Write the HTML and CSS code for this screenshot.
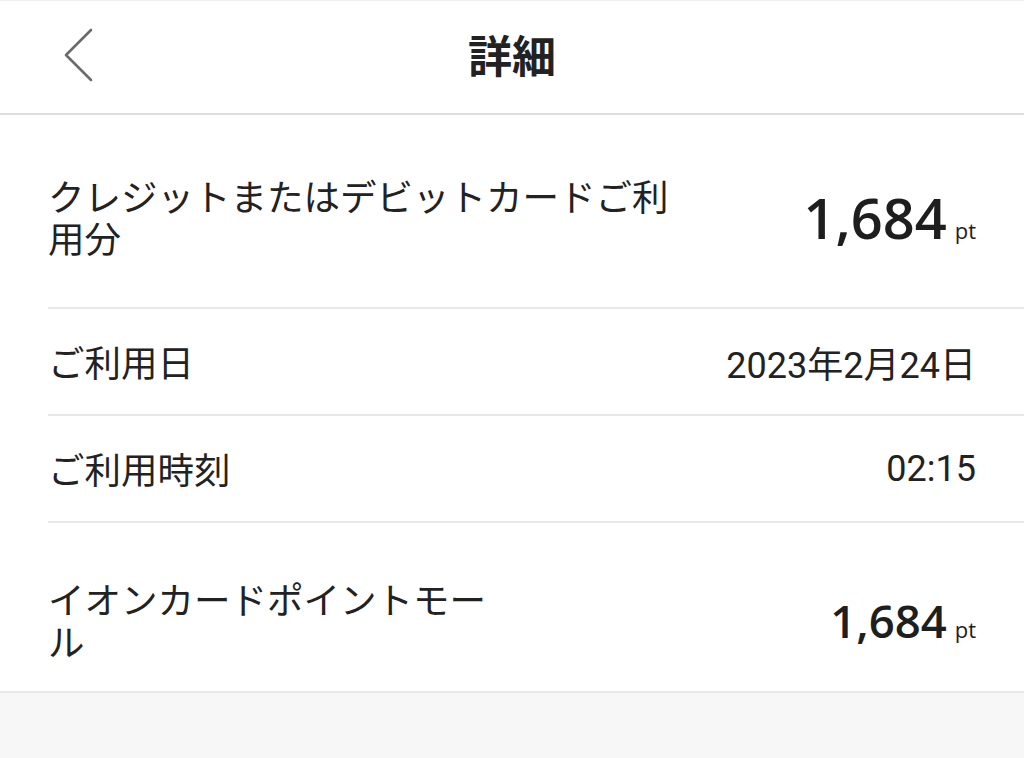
FILE: index.html
```html
<!DOCTYPE html>
<html lang="ja">
<head>
<meta charset="utf-8">
<title>詳細</title>
<link rel="stylesheet" href="styles.css">
</head>
<body>
<div class="app">
  <header class="topbar">
    <div class="topbar__side">
      <span class="back" aria-label="戻る">
        <svg width="30" height="54" viewBox="0 0 30 54"><polyline points="27,2 2,27 27,52" fill="none" stroke="#6b6b6b" stroke-width="2.6" stroke-linecap="round" stroke-linejoin="round"/></svg>
      </span>
    </div>
    <h1 class="topbar__title">詳細</h1>
    <div class="topbar__side"></div>
  </header>
  <main class="detail">
    <div class="row row--head">
      <div class="label label--wide">クレジットまたはデビットカードご利用分</div>
      <div class="amount amount--lg">1,684<span class="unit">pt</span></div>
    </div>
    <div class="row row--info">
      <div class="label">ご利用日</div>
      <div class="value">2023年2月24日</div>
    </div>
    <div class="row row--info">
      <div class="label">ご利用時刻</div>
      <div class="value">02:15</div>
    </div>
    <div class="row row--shop">
      <div class="label label--narrow">イオンカードポイントモール</div>
      <div class="amount amount--md">1,684<span class="unit">pt</span></div>
    </div>
  </main>
  <div class="fill"></div>
</div>
</body>
</html>
```
FILE: styles.css
```css
* { box-sizing: border-box; }
html, body { margin: 0; padding: 0; height: 100%; }
body {
  background: #f7f7f7;
  color: #222;
  font-family: "Noto Sans CJK JP", "Noto Sans", sans-serif;
}
.app {
  display: flex;
  flex-direction: column;
  min-height: 100%;
}
.topbar {
  display: grid;
  grid-template-columns: 1fr auto 1fr;
  align-items: center;
  height: 115px;
  background: #fff;
  border-top: 1px solid #f0f0f0;
  border-bottom: 2px solid #dedede;
}
.topbar__side { display: flex; align-items: center; padding-left: 64px; }
.back { display: flex; width: 30px; height: 54px; margin-top: -4px; }
.topbar__title {
  margin: -6px 0 0;
  font-size: 44px;
  font-weight: 700;
  color: #222;
  line-height: 1;
}
.detail { background: #fff; }
.row {
  display: flex;
  align-items: center;
  justify-content: space-between;
  margin-left: 48px;
  padding-right: 48px;
  border-bottom: 2px solid #e8e8e8;
}
.row--head { height: 194px; padding-top: 12px; }
.row--info { height: 107px; }
.row--shop {
  height: 170px;
  padding-top: 26px;
  margin-left: 0;
  padding-left: 48px;
}
.label {
  font-size: 36.5px;
  line-height: 42px;
  color: #222;
}
.label--wide { width: 640px; }
.label--narrow { width: 450px; }
.value {
  font-family: Roboto, "Noto Sans CJK JP", sans-serif;
  font-size: 36px;
  color: #222;
}
.amount {
  font-family: "Open Sans", "Noto Sans", sans-serif;
  font-weight: 600;
  color: #1e1e1e;
  white-space: nowrap;
}
.amount--lg { font-size: 56px; }
.amount--md { font-size: 45.5px; }
.unit {
  font-size: 22px;
  font-weight: 500;
  margin-left: 8px;
}
.fill { flex: 1; background: #f7f7f7; }
```
